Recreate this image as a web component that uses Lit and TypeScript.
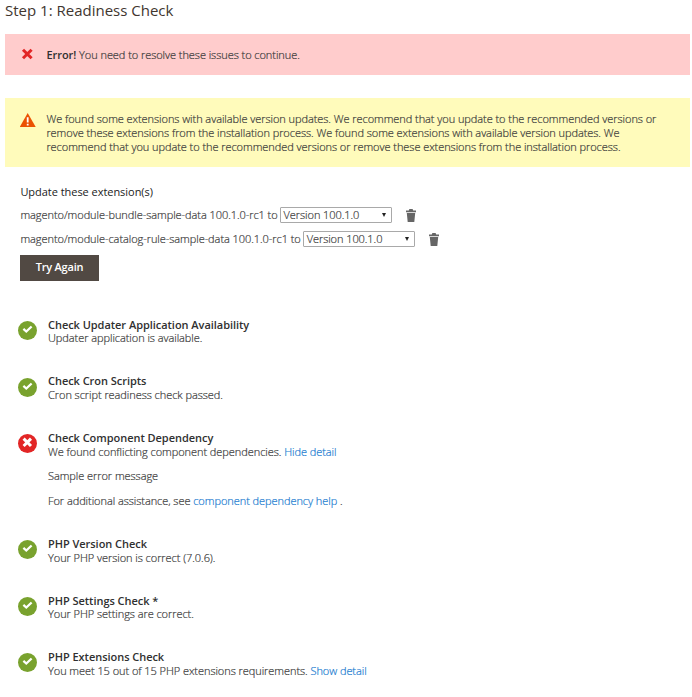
import { LitElement, html, css, svg } from "lit";
import { customElement, property } from "lit/decorators.js";

@customElement("status-icon")
class StatusIcon extends LitElement {
  @property() kind = "ok";
  static styles = css`
    :host { display: block; width: 19px; height: 19px; }
    svg { display: block; }
  `;
  render() {
    return html`<svg width="19" height="19" viewBox="0 0 19 19">
      <circle cx="9.5" cy="9.5" r="9.5" fill=${this.kind === "ok" ? "#79a22e" : "#e22626"}></circle>
      ${this.kind === "ok"
        ? svg`<path d="M5.4 7.9 L8.3 10.5 L13.6 5.5" fill="none" stroke="#fff" stroke-width="2.3"/>`
        : svg`<path d="M5.6 4.6 L13 12 M13 4.6 L5.6 12" fill="none" stroke="#fff" stroke-width="3"/>`}
    </svg>`;
  }
}

@customElement("extension-row")
class ExtensionRow extends LitElement {
  @property() name = "";
  static styles = css`
    :host { display: flex; align-items: center; height: 24px; white-space: nowrap; }
    .select { box-sizing: border-box; width: 112px; height: 16px; border: 1px solid #a9a9a9; border-radius: 1px; background: #fff;
      margin-left: 2px; padding: 0 5px 0 3px; display: flex; align-items: center; justify-content: space-between; letter-spacing: -.07px; }
    .arrow { width: 0; height: 0; border: 2.5px solid transparent; border-top: 4px solid #222; border-bottom: 0; }
    .trash { margin-left: 14px; }
  `;
  render() {
    return html`<span class="name">${this.name}</span>
      <div class="select"><span>Version 100.1.0</span><i class="arrow"></i></div>
      <svg class="trash" width="10" height="13" viewBox="0 0 10 13" fill="#666">
        <path d="M0 1.5 H2.8 L3.4 0 H6.6 L7.2 1.5 H10 V3.2 H0Z M.8 4 H9.2 L8.3 13 H1.7Z"></path>
      </svg>`;
  }
}

@customElement("app-root")
class AppRoot extends LitElement {
  static styles = css`
    :host { display: block; box-sizing: border-box; height: 697px; overflow: hidden; background: #fff; padding: 0 2px 0 5px;
      font: 300 11px/14px "Open Sans", sans-serif; letter-spacing: -.06px; color: #3a3a3a; -webkit-text-stroke: .2px; }
    h1, .label, button, b { -webkit-text-stroke: 0; }
    h1 { margin: 0; font-size: 15px; line-height: 20px; font-weight: 400; height: 34px; color: #41362f; letter-spacing: 0; }
    .msg { display: flex; box-sizing: border-box; padding-left: 15px; }
    .msg svg { flex: none; width: 16px; height: 16px; }
    .error { height: 41px; background: #ffcccc; align-items: center; }
    .warn { height: 69px; margin-top: 23px; background: #fffbbb; padding-top: 14px; }
    .msg p { margin: 0 0 0 10.4px; white-space: nowrap; }
    .ext { padding: 18px 0 0 15.4px; }
    .label { margin-bottom: 4px; font-weight: 400; letter-spacing: -.04px; color: #222; }
    button { display: block; margin: 4px 0 0 -.4px; border: 0; width: 79px; height: 26px; padding: 0 0 2px;
      background: #514943; color: #fff; font: 600 11px/22px "Open Sans", sans-serif; letter-spacing: -.2px; }
    .check { display: flex; padding-left: 13px; gap: 11px; white-space: nowrap; box-sizing: border-box; height: 56.6px; line-height: 13.6px; }
    .checks { padding-top: 36.75px; }
    .check.tall { height: 106.1px; }
    .check p { margin: 0; }
    .check .extra { margin-top: 10.95px; }
    status-icon { margin-top: 3.25px; flex: none; }
    a { color: #1a7bd0; }
    b { font-weight: 600; letter-spacing: -.04px; color: #303030; }
  `;
  render() {
    const check = (title: string, body: unknown, kind = "ok") => html`
      <div class="check ${kind === "ok" ? "" : "tall"}"><status-icon kind=${kind}></status-icon>
        <div><p><b>${title}</b></p>${body}</div></div>`;
    return html`
      <h1>Step 1: Readiness Check</h1>
      <div class="msg error">
        <svg viewBox="0 0 16 16"><path d="M3 2.7 L11.6 11.3 M11.6 2.7 L3 11.3" stroke="#e22626" stroke-width="3"></path></svg>
        <p><b>Error!</b> You need to resolve these issues to continue.</p>
      </div>
      <div class="msg warn">
        <svg viewBox="0 0 16 16"><path d="M7.7 1 L15.7 15 H-.3Z" fill="#eb5202"></path><path d="M7.7 5.2 V10.5 M7.7 11.7 V13.5" stroke="#fff" stroke-width="1.8"></path></svg>
        <p>We found some extensions with available version updates. We recommend that you update to the recommended versions or<br>remove these extensions from the installation process. We found some extensions with available version updates. We<br>recommend that you update to the recommended versions or remove these extensions from the installation process.</p>
      </div>
      <div class="ext">
        <div class="label">Update these extension(s)</div>
        <extension-row name="magento/module-bundle-sample-data 100.1.0-rc1 to"></extension-row>
        <extension-row name="magento/module-catalog-rule-sample-data 100.1.0-rc1 to"></extension-row>
        <button>Try Again</button>
      </div>
      <div class="checks">
        ${check("Check Updater Application Availability", html`<p>Updater application is available.</p>`)}
        ${check("Check Cron Scripts", html`<p>Cron script readiness check passed.</p>`)}
        ${check("Check Component Dependency", html`<p>We found conflicting component dependencies. <a>Hide detail</a></p>
          <p class="extra">Sample error message</p>
          <p class="extra">For additional assistance, see <a>component dependency help</a> .</p>`, "bad")}
        ${check("PHP Version Check", html`<p>Your PHP version is correct (7.0.6).</p>`)}
        ${check("PHP Settings Check *", html`<p>Your PHP settings are correct.</p>`)}
        ${check("PHP Extensions Check", html`<p>You meet 15 out of 15 PHP extensions requirements. <a>Show detail</a></p>`)}
      </div>`;
  }
}
